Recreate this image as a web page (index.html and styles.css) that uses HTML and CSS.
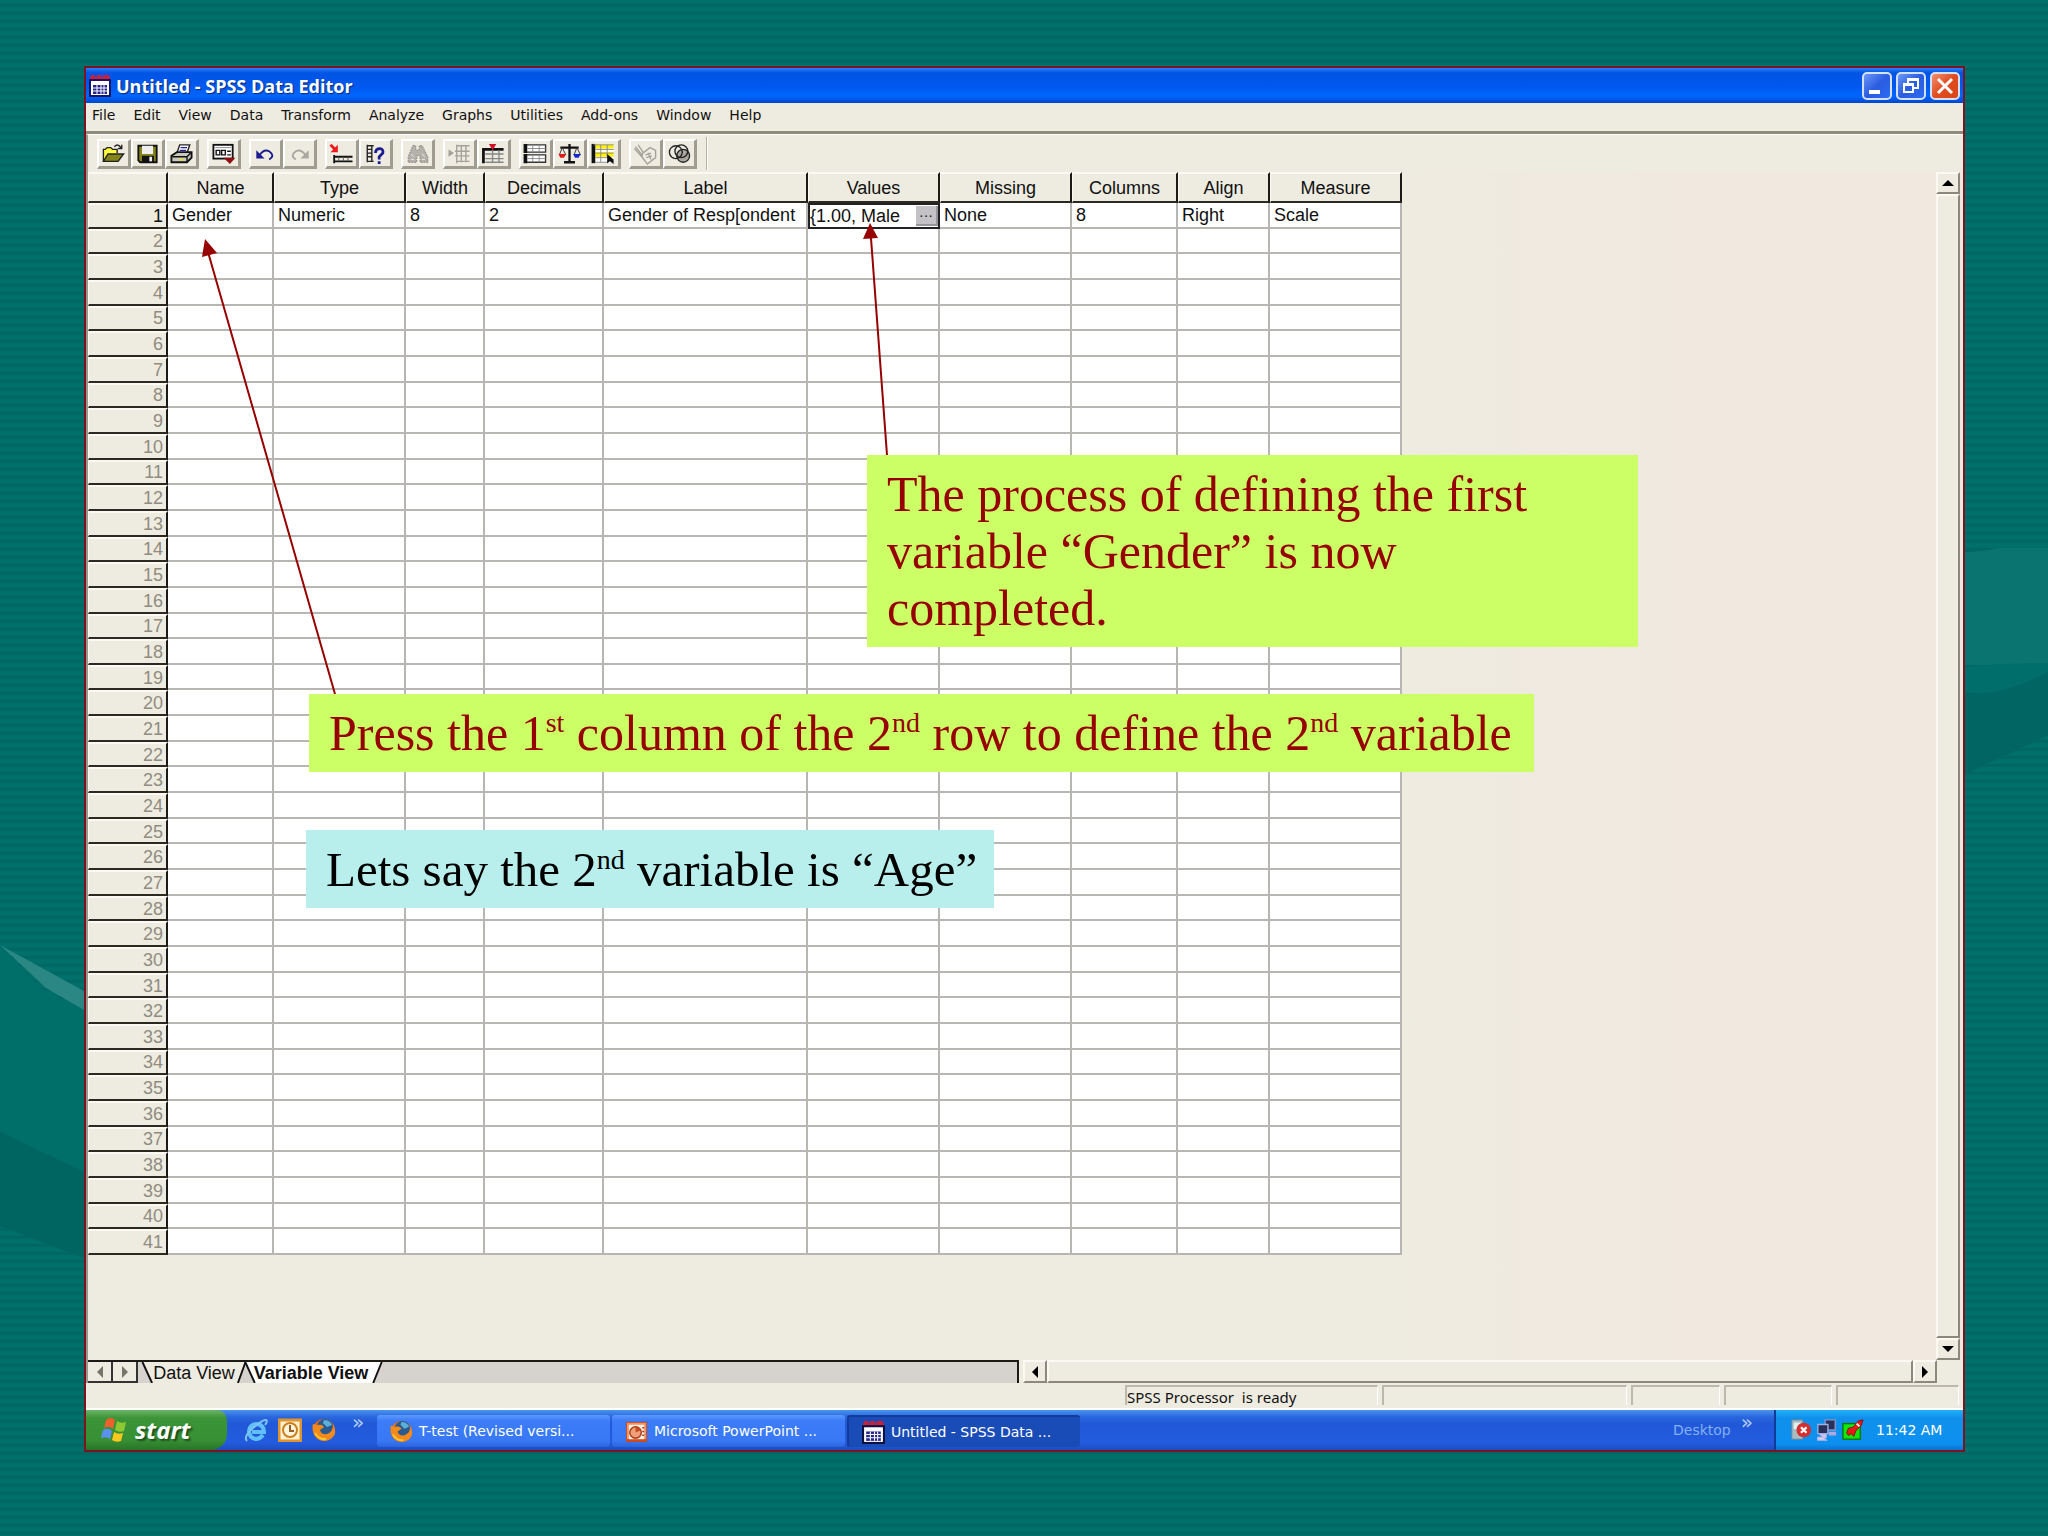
FILE: index.html
```html
<!DOCTYPE html>
<html lang="en">
<head>
<meta charset="utf-8">
<title>Untitled - SPSS Data Editor</title>
<link rel="stylesheet" href="styles.css">
</head>
<body>
<div class="slide">
  <svg class="backdrop" viewBox="0 0 2048 1536" preserveAspectRatio="none" aria-hidden="true">
    <path d="M0 945 L40 988 L84 1010 V1172 L0 1132Z" fill="#006e69"/>
    <path d="M0 1132 L84 1172 V1258 L0 1226Z" fill="#006460"/>
    <path d="M0 945 L84 991 V1010 L46 988Z" fill="#2a8783"/>
    <path d="M1964 550 Q1985 554 1998 548 H2048 V735 L1964 775Z" fill="#006563"/>
    <path d="M1964 552 Q1985 552 1998 548 H2048 V665 H1964Z" fill="#0a7570"/>
    <path d="M1964 667 Q2000 663 2048 663 V672 Q2000 698 1964 692Z" fill="#006e6b"/>
  </svg>

  <main class="window">
    <header class="titlebar">
      <svg class="app-icon" viewBox="0 0 22 22" aria-hidden="true"><path d="M1 3h20M2 1h4M8 1h4M14 1h6" stroke="#c8203c" stroke-width="2"/><rect x="1" y="5" width="20" height="16" fill="#fff" stroke="#15156a" stroke-width="2"/><path d="M4 10h14v9H4z" fill="#24248c"/><path d="M4 13h14M4 16h14M8 10v9M12 10v9M15 10v9" stroke="#fff"/></svg>
      <h1>Untitled - SPSS Data Editor</h1>
      <div class="controls">
        <button type="button" aria-label="Minimize"><svg viewBox="0 0 26 24"><rect x="5" y="16" width="11" height="4" fill="#fff"/></svg></button>
        <button type="button" aria-label="Restore"><svg viewBox="0 0 26 24"><path d="M10 9V5h10v9h-4M10 6h10" fill="none" stroke="#fff" stroke-width="2"/><path d="M6 10h9v8H6zM6 11h9" fill="none" stroke="#fff" stroke-width="2"/></svg></button>
        <button type="button" class="close" aria-label="Close"><svg viewBox="0 0 26 24"><path d="M6 5l14 14M20 5L6 19" stroke="#fff" stroke-width="3"/></svg></button>
      </div>
    </header>

    <nav class="menu">
      <button type="button">File</button><button type="button">Edit</button><button type="button">View</button><button type="button">Data</button><button type="button">Transform</button><button type="button">Analyze</button><button type="button">Graphs</button><button type="button">Utilities</button><button type="button">Add-ons</button><button type="button">Window</button><button type="button">Help</button>
    </nav>

    <div class="toolbar">
      <div class="group">
        <button type="button" aria-label="Open"><svg viewBox="0 0 26 24"><path d="M2 20V7h2l2-2h4l2 2h5v4" fill="#ffff3c" stroke="#222" stroke-width="1.5"/><path d="M2 20l5-8h17l-6 8z" fill="#84841a" stroke="#222" stroke-width="1.5"/><path d="M14 4q4-4 7 1M22 2v4h-4" fill="none" stroke="#222" stroke-width="1.5"/></svg></button>
        <button type="button" aria-label="Save"><svg viewBox="0 0 26 24"><path d="M3 3h20v18H5l-2-2z" fill="#84841a" stroke="#111" stroke-width="2"/><rect x="7" y="3" width="12" height="9" fill="#eee"/><rect x="7" y="14" width="13" height="7" fill="#111"/><rect x="15" y="15" width="3" height="5" fill="#eee"/></svg></button>
        <button type="button" aria-label="Print"><svg viewBox="0 0 26 24"><path d="M8 11l3-9h11l-3 9z" fill="#fff" stroke="#222" stroke-width="1.5"/><path d="M12 5h7M11 8h7" stroke="#2222a0" stroke-width="1.5"/><path d="M2 14l6-4h16v6l-5 5H2z" fill="#c8c8c0" stroke="#111" stroke-width="2"/><path d="M3 15h16l4-4M19 15v6" fill="none" stroke="#111" stroke-width="1.5"/><path d="M11 18h4" stroke="#e8e020" stroke-width="2"/></svg></button>
      </div>
      <div class="group">
        <button type="button" aria-label="Dialog recall"><svg viewBox="0 0 26 24"><rect x="2" y="2" width="21" height="15" fill="#fff" stroke="#111" stroke-width="2"/><path d="M4 5h17" stroke="#888"/><path d="M5 8h4v5H5zM11 8h4v5h-4zM17 9h4M17 13h4" fill="none" stroke="#111" stroke-width="1.5"/><path d="M13 16h13l-6 7z" fill="#8e1010"/></svg></button>
      </div>
      <div class="group">
        <button type="button" aria-label="Undo"><svg viewBox="0 0 26 24"><path d="M6 14q5-8 11-5 7 5 0 9" fill="none" stroke="#1c1c90" stroke-width="2"/><path d="M3 8v9h9z" fill="#1c1c90"/></svg></button>
        <button type="button" aria-label="Redo" disabled><svg viewBox="0 0 26 24"><path d="M20 14q-5-8-11-5-7 5 0 9" fill="none" stroke="#aaa8a0" stroke-width="2"/><path d="M23 8v9h-9z" fill="#aaa8a0"/></svg></button>
      </div>
      <div class="group">
        <button type="button" aria-label="Go to case"><svg viewBox="0 0 26 24"><path d="M1 2l6 6" stroke="#f01818" stroke-width="3"/><path d="M9 2v8H1z" fill="#f01818"/><path d="M5 13v9M5 15h20M5 20h20" stroke="#111" stroke-width="2"/><path d="M10 15v5M15 15v5M20 15v5" stroke="#555"/></svg></button>
        <button type="button" aria-label="Variables"><svg viewBox="0 0 26 24"><path d="M4 3h7M4 2v19M4 20h7M9 3v17M4 7h5M4 11h5M4 15h5" fill="none" stroke="#222" stroke-width="1.5"/><path d="M13 11q0-5 5-5 4 1 3 5l-4 4v3M17 20v3" fill="none" stroke="#1c1c90" stroke-width="3"/></svg></button>
      </div>
      <div class="group">
        <button type="button" aria-label="Find" disabled><svg viewBox="0 0 26 24"><path d="M8 3h3v5h4V3h3l6 12v6h-8v-7h-4v7H3v-6z" fill="#b4b2aa" stroke="#98968e" stroke-dasharray="2 1" stroke-width="1.5"/><path d="M6 12l3 3M18 12l3 3M6 18h3M18 18h3" stroke="#eee"/></svg></button>
      </div>
      <div class="group">
        <button type="button" aria-label="Insert case" disabled><svg viewBox="0 0 26 24"><path d="M1 7v8l6-4z" fill="#a4a29a"/><path d="M10 2v20M10 3h14M8 9h16M8 14h16M10 20h14M15 3v18M20 3v18" stroke="#a4a29a" stroke-width="1.5"/></svg></button>
        <button type="button" aria-label="Insert variable"><svg viewBox="0 0 26 24"><path d="M2 22V7h22" fill="none" stroke="#111" stroke-width="3"/><path d="M4 12h20M4 17h20M4 21h20M12 8v14M19 8v14" stroke="#888" stroke-width="1.5"/><path d="M8 1h8l-4 7z" fill="#d01028"/></svg></button>
      </div>
      <div class="group">
        <button type="button" aria-label="Split file"><svg viewBox="0 0 26 24"><path d="M3 2h21v8H3zM3 13h21v8H3z" fill="#fff" stroke="#333" stroke-width="1.5"/><path d="M2 1v10M2 12v10" stroke="#111" stroke-width="4"/><path d="M4 6h20M4 17h20M10 3v7M17 3v7M10 14v7M17 14v7" stroke="#888"/></svg></button>
        <button type="button" aria-label="Weight cases"><svg viewBox="0 0 26 24"><path d="M13 1v20M3 5h20M7 21h12" stroke="#111" stroke-width="2.5"/><path d="M5 5l-3 8h7L5 5M21 5l-3 8h7z" fill="none" stroke="#333"/><path d="M1 12h8l-2 4H3z" fill="#e01818"/><path d="M17 12h8l-2 4h-4z" fill="#1828d0"/></svg></button>
        <button type="button" aria-label="Select cases"><svg viewBox="0 0 26 24"><rect x="2" y="2" width="22" height="19" fill="#fff"/><path d="M3 2h21v4H3zM3 10h21v5H3z" fill="#fff200"/><path d="M2 1v21" stroke="#111" stroke-width="4"/><path d="M2 2h22M4 7h20M4 11h20M4 16h14M4 21h14M10 2v19M17 2v14" stroke="#888"/><path d="M17 12v10l3-2 4 3v-5z" fill="#111"/></svg></button>
      </div>
      <div class="group">
        <button type="button" aria-label="Value labels" disabled><svg viewBox="0 0 26 24"><path d="M2 4l8 10M1 6l8 9M5 2l6 9M10 11l8-6 6 3v8l-9 7-6-8z" fill="none" stroke="#a4a29a" stroke-width="1.5"/><path d="M13 13l6-2M14 16l6-2M16 11l3 7" stroke="#a4a29a" stroke-width="1.5"/></svg></button>
        <button type="button" aria-label="Use sets"><svg viewBox="0 0 26 24"><circle cx="17" cy="14" r="7" fill="#aaa8a0" stroke="#222" stroke-width="1.5"/><circle cx="9" cy="10" r="7" fill="none" stroke="#222" stroke-width="1.5"/><circle cx="15" cy="9" r="7" fill="none" stroke="#222" stroke-width="1.5"/></svg></button>
      </div>
      <span class="divider"></span>
    </div>

    <section class="workspace">
      <div class="grid-area">
        <table class="grid">
          <colgroup><col class="c-num"><col class="c-name"><col class="c-type"><col class="c-width"><col class="c-dec"><col class="c-label"><col class="c-type"><col class="c-type"><col class="c-name"><col class="c-align"><col class="c-type"></colgroup>
          <thead><tr><th></th><th>Name</th><th>Type</th><th>Width</th><th>Decimals</th><th>Label</th><th>Values</th><th>Missing</th><th>Columns</th><th>Align</th><th>Measure</th></tr></thead>
          <tbody id="rows">
            <tr class="filled"><th>1</th><td>Gender</td><td>Numeric</td><td>8</td><td>2</td><td>Gender of Resp[ondent</td><td class="active"><div class="editor"><span>{1.00, Male</span><button type="button" aria-label="Edit values">···</button></div></td><td>None</td><td>8</td><td>Right</td><td>Scale</td></tr>
          </tbody>
        </table>
      </div>
      <div class="vscroll">
        <button type="button" aria-label="Scroll up"><svg viewBox="0 0 12 6"><path d="M0 6L6 0l6 6z"/></svg></button>
        <div class="thumb"></div>
        <button type="button" aria-label="Scroll down"><svg viewBox="0 0 12 6"><path d="M0 0l6 6 6-6z"/></svg></button>
      </div>
    </section>

    <div class="sheetbar">
      <div class="tabs">
        <button type="button" class="step" aria-label="Previous sheet"><svg viewBox="0 0 6 12"><path d="M6 0L0 6l6 6z"/></svg></button>
        <button type="button" class="step" aria-label="Next sheet"><svg viewBox="0 0 6 12"><path d="M0 0l6 6-6 6z"/></svg></button>
        <button type="button" class="tab data"><svg viewBox="0 0 112 22" aria-hidden="true"><path d="M2 0l12 22h88l8-22z" fill="#eeebe0"/><path d="M2 0l10 22M110 0l-8 22" stroke="#111" stroke-width="2"/></svg><span>Data View</span></button>
        <button type="button" class="tab variable"><svg viewBox="0 0 144 22" aria-hidden="true"><path d="M0 0l10 22h124l10-22z" fill="#fff"/><path d="M0 0l10 22M143 0l-9 22" stroke="#111" stroke-width="2"/></svg><span>Variable View</span></button>
      </div>
      <div class="hscroll">
        <button type="button" aria-label="Scroll left"><svg viewBox="0 0 6 12"><path d="M6 0L0 6l6 6z"/></svg></button>
        <div class="thumb"></div>
        <button type="button" aria-label="Scroll right"><svg viewBox="0 0 6 12"><path d="M0 0l6 6-6 6z"/></svg></button>
      </div>
    </div>

    <div class="status">
      <span class="s-main">SPSS Processor&nbsp; is ready</span><span class="s-wide"></span><span class="s-a"></span><span class="s-b"></span><span class="s-c"></span>
    </div>

    <footer class="taskbar">
      <button type="button" class="start"><svg viewBox="0 0 28 26" aria-hidden="true"><path d="M6 3q5-4 9 0l-2 9q-4-4-9-1z" fill="#f0602c"/><path d="M17 4q4 3 9 1l-2 9q-5 2-9-1z" fill="#8cc832"/><path d="M3 13q5-3 9 1l-2 8q-4-3-9-1z" fill="#5a90f0"/><path d="M14 15q4 3 9 1l-2 8q-5 2-9-1z" fill="#fac81e"/></svg><span>start</span></button>
      <div class="quick">
        <a href="#" aria-label="Internet Explorer"><svg viewBox="0 0 24 24"><path d="M19 17q-3 4-7 4-7-1-7-8 1-7 8-7 7 1 7 8H8" fill="none" stroke="#62c0f8" stroke-width="4"/><path d="M3 23q-4-4 6-13T22 2q2 1-1 5" fill="none" stroke="#7cc4f0" stroke-width="2"/></svg></a>
        <a href="#" aria-label="Outlook"><svg viewBox="0 0 24 24"><rect x="1" y="2" width="22" height="21" fill="#fff0d0" stroke="#e09430" stroke-width="3"/><circle cx="12" cy="12" r="7" fill="#fff6e0" stroke="#c88020" stroke-width="2"/><path d="M12 7v6h4" fill="none" stroke="#96601c" stroke-width="2"/></svg></a>
        <a href="#" aria-label="Firefox"><svg viewBox="0 0 24 24"><circle cx="12" cy="12" r="11" fill="#e86c14"/><circle cx="13" cy="9" r="8" fill="#2a5a90"/><path d="M12 2q6 0 8 5l-5 2-4-4z" fill="#5cb0d8"/><path d="M1 6l5 1q4-1 6 2l-4 3q1 5 7 4 6-2 6-9 5 8-1 13-8 6-15 0-6-6-4-14z" fill="#f48a1c"/><path d="M3 15q4 7 11 6" fill="none" stroke="#f8c830" stroke-width="2"/></svg></a>
        <span class="more">»</span>
      </div>
      <button type="button" class="task"><svg viewBox="0 0 24 24" aria-hidden="true"><circle cx="12" cy="12" r="11" fill="#e86c14"/><circle cx="13" cy="9" r="8" fill="#2a5a90"/><path d="M12 2q6 0 8 5l-5 2-4-4z" fill="#5cb0d8"/><path d="M1 6l5 1q4-1 6 2l-4 3q1 5 7 4 6-2 6-9 5 8-1 13-8 6-15 0-6-6-4-14z" fill="#f48a1c"/><path d="M3 15q4 7 11 6" fill="none" stroke="#f8c830" stroke-width="2"/></svg><span>T-test (Revised versi...</span></button>
      <button type="button" class="task"><svg viewBox="0 0 24 24" aria-hidden="true"><rect x="1" y="2" width="22" height="21" fill="#c84c20"/><path d="M2 3h20v17H2z" fill="#f09468"/><path d="M4 5h16v15H4z" fill="#fff0e4"/><circle cx="11" cy="13" r="6" fill="#f0a078" stroke="#a83c18" stroke-width="1.5"/><path d="M11 13V7a6 6 0 0 1 5 4z" fill="#c84c20"/><path d="M18 8h2M18 12h2M18 16h2" stroke="#a83c18" stroke-width="1.5"/></svg><span>Microsoft PowerPoint ...</span></button>
      <button type="button" class="task current"><svg viewBox="0 0 22 22" aria-hidden="true"><path d="M1 3h20M2 1h4M8 1h4M14 1h6" stroke="#c8203c" stroke-width="2"/><rect x="1" y="5" width="20" height="16" fill="#fff" stroke="#101040" stroke-width="2"/><path d="M4 10h14v9H4z" fill="#24248c"/><path d="M4 13h14M4 16h14M8 10v9M12 10v9M15 10v9" stroke="#fff"/></svg><span>Untitled - SPSS Data ...</span></button>
      <div class="desktop"><span>Desktop</span><span class="more">»</span></div>
      <div class="tray">
        <svg viewBox="0 0 24 24" aria-hidden="true"><path d="M2 1h12v21H2z" fill="#a8bcc4" stroke="#6c8898"/><path d="M4 4h8v7H4z" fill="#dcf0f0"/><circle cx="15" cy="12" r="8" fill="#d43030"/><path d="M12 9l6 6M18 9l-6 6" stroke="#fff" stroke-width="2.5"/></svg>
        <svg viewBox="0 0 24 24" aria-hidden="true"><path d="M10 1h11v11H10z" fill="#28305c" stroke="#8898c8" stroke-width="1.5"/><path d="M14 14h8v4h-8z" fill="#b0a8dc"/><path d="M2 6h11v10H2z" fill="#28305c" stroke="#a0b0e0" stroke-width="1.5"/><path d="M5 17h6v3H2v3h9z" fill="#d8d0f4" stroke="#c0b8e8" stroke-width="1.5"/></svg>
        <svg viewBox="0 0 24 24" aria-hidden="true"><rect x="1" y="5" width="19" height="17" fill="#10e810" stroke="#087808" stroke-width="1.5"/><path d="M5 15l2-5 5-1 6-7 5-1-2 6-6 6-2 6-3-3-3 2z" fill="#e81818" stroke="#801010"/><path d="M16 5l3 3" stroke="#fff" stroke-width="2"/></svg>
        <time>11:42 AM</time>
      </div>
    </footer>
  </main>

  <svg class="arrows" width="900" height="700" viewBox="0 0 900 700" aria-hidden="true">
    <path d="M335 694L208 252M887 455L871 238" fill="none" stroke="#960000" stroke-width="2"/>
    <path d="M205 239l12 14-15 4zM870 223l8 15-15 1z" fill="#960000"/>
  </svg>
  <p class="note done">The process of defining the first variable “Gender” is now completed.</p>
  <p class="note press">Press the 1<sup>st</sup> column of the 2<sup>nd</sup> row to define the 2<sup>nd</sup> variable</p>
  <p class="note age">Lets say the 2<sup>nd</sup> variable is “Age”</p>
</div>
<script src="rows.js"></script>
</body>
</html>
```
FILE: rows.js
```js
// Fill the variable sheet with the empty numbered rows.
const body = document.getElementById("rows");
for (let n = 2; n <= 41; n++) {
  const row = body.insertRow();
  const head = document.createElement("th");
  head.textContent = n;
  row.append(head);
  for (let c = 0; c < 10; c++) row.insertCell();
}
```
FILE: styles.css
```css
* { box-sizing: border-box; }
body { margin: 0; }
button { margin: 0; padding: 0; border: 0; background: none; font: inherit; color: inherit; }
h1, p { margin: 0; }

.slide {
  position: relative;
  display: flex;
  min-height: 100vh;
  padding: 66px 83px 84px 84px;
  background: repeating-linear-gradient(#00706b 0, #00706b 3px, #006461 5px, #00706b 8px);
}
.backdrop { position: absolute; inset: 0; width: 100%; height: 100%; }
.window {
  position: relative;
  flex: 1;
  min-width: 0;
  display: flex;
  flex-direction: column;
  border: 2px solid #7a1420;
  background: #eeebe0;
  font: 15px/20px "DejaVu Sans", sans-serif;
  color: #111;
}

.titlebar {
  display: flex;
  align-items: center;
  gap: 5px;
  height: 35px;
  padding: 0 3px 0 3px;
  background: linear-gradient(#2a80f8 0, #0054e4 5px, #0058ee 18px, #0066ff 28px, #0046cc 35px);
}
.app-icon { width: 22px; height: 22px; }
.titlebar h1 {
  flex: 1;
  font: bold 18px/22px "Open Sans", sans-serif;
  color: #fff;
  text-shadow: 1px 1px 1px #0a2a80;
}
.controls { display: flex; gap: 4px; }
.controls button {
  width: 30px;
  height: 28px;
  border: 2px solid #d4e0fc;
  border-radius: 5px;
  background: linear-gradient(135deg, #6c98f8, #2a5ce0 50%, #2c6cf4);
}
.controls .close { background: linear-gradient(135deg, #f09070, #e04c20 50%, #d84818); }
.controls svg { display: block; width: 26px; height: 24px; }

.menu {
  display: flex;
  gap: 18px;
  padding: 2px 6px 6px;
  font-size: 14px;
  border-bottom: 3px solid #8e8a7c;
}

.toolbar {
  display: flex;
  gap: 8px;
  height: 38px;
  padding: 4px 9px;
  border-left: 2px solid #9c988c;
  border-top: 1px solid #fff;
}
.group { display: flex; }
.group button {
  width: 34px;
  height: 30px;
  border: solid;
  border-width: 2px 3px 3px 2px;
  border-color: #fff #a09c90 #a09c90 #fff;
}
.group svg { display: block; width: 25px; height: 22px; margin: auto; }
.divider { width: 2px; margin: -2px 0 -2px 1px; background: #b4b0a4; border-right: 1px solid #fff; }

.workspace {
  flex: 1;
  display: flex;
  border-left: 2px solid #9c988c;
  background: linear-gradient(90deg, #eeebe0 70%, #f1e9e0 85%);
}
.grid-area { flex: 1; min-width: 0; }
.grid {
  width: 1314px;
  height: 1083px;
  table-layout: fixed;
  border-collapse: separate;
  border-spacing: 0;
  font: 18px/20px "Liberation Sans", Arial, sans-serif;
}
.c-num { width: 80px; }
.c-name { width: 106px; }
.c-type { width: 132px; }
.c-width { width: 79px; }
.c-dec { width: 119px; }
.c-label { width: 204px; }
.c-align { width: 92px; }
.grid th {
  padding: 0;
  font-weight: normal;
  background: #eeebe0;
  border: solid;
  border-width: 2px 2px 2px 1px;
  border-color: #fbf9f2 #1c1a14 #2c2a20 #fbf9f2;
}
.grid thead th { height: 31px; }
.grid tbody th { text-align: right; color: #908c80; padding-right: 3px; }
.grid tbody .filled th { color: #111; }
.grid td {
  padding: 0 0 0 4px;
  background: #fff;
  border: solid #b8b6b2;
  border-width: 0 2px 2px 0;
  white-space: nowrap;
}
.grid td.active { padding: 0; border: 2px solid #222; }
.editor { display: flex; justify-content: space-between; align-items: center; }
.editor button {
  width: 22px;
  height: 20px;
  background: #c4c2c6;
  border: solid #98969a;
  border-width: 0 2px 2px 0;
  line-height: 18px;
  font-size: 14px;
}

.vscroll { display: flex; flex-direction: column; width: 27px; padding-right: 3px; }
.vscroll button, .hscroll button, .thumb {
  display: grid;
  place-items: center;
  background: #eeebe0;
  border: 2px solid;
  border-color: #fbf9f2 #8c887c #8c887c #fbf9f2;
}
.vscroll button { height: 22px; }
.vscroll svg { width: 12px; height: 6px; }
.vscroll .thumb { flex: 1; }
.hscroll svg, .step svg { width: 6px; height: 12px; }

.sheetbar { display: flex; gap: 4px; height: 23px; padding-right: 26px; border-left: 2px solid #9c988c; }
.tabs {
  flex: 0 1 931px;
  display: flex;
  border-top: 2px solid #1c1a14;
  border-right: 2px solid #1c1a14;
  background: #d6d2cd;
  font: 18px/20px "Liberation Sans", Arial, sans-serif;
}
.step {
  display: grid;
  place-items: center;
  width: 25px;
  background: #eeebe0;
  border: solid #333;
  border-width: 0 2px 2px 0;
}
.step svg { fill: #77746a; }
.tab { position: relative; height: 21px; }
.tab svg { position: absolute; inset: 0; width: 100%; height: 100%; }
.tab span { position: relative; }
.data { width: 112px; }
.variable { width: 144px; margin-left: -8px; padding-right: 6px; font-weight: bold; }
.hscroll { flex: 1; display: flex; }
.hscroll button { width: 24px; }
.hscroll .thumb { flex: 1; }

.status {
  display: flex;
  justify-content: flex-end;
  gap: 4px;
  height: 27px;
  padding: 2px 4px 3px 0;
  border-bottom: 2px solid #fff;
  font-size: 15px;
  font-family: "Noto Sans", sans-serif;
}
.status span { border: solid; border-width: 2px 1px 0 2px; border-color: #bcb8ac #fff #fff #bcb8ac; white-space: nowrap; }
.s-main { width: 253px; }
.s-wide { width: 245px; }
.s-a { width: 89px; }
.s-b { width: 108px; }
.s-c { width: 123px; }

.taskbar {
  display: flex;
  height: 40px;
  background: linear-gradient(#4a94ee 0, #2a66dc 7px, #2058d8 14px, #245ce0 32px, #1c4cc0 40px);
  color: #fff;
  font-size: 14px;
}
.start {
  display: flex;
  align-items: center;
  gap: 7px;
  width: 141px;
  padding-left: 14px;
  border-radius: 0 10px 16px 0;
  background: linear-gradient(#6cb468 0, #3c9438 8px, #389034 30px, #287428 40px);
  font: italic bold 24px/30px "Open Sans", sans-serif;
  text-shadow: 2px 2px 2px #1c4c1c;
}
.start svg { width: 28px; height: 26px; }
.quick { display: flex; align-items: center; gap: 10px; width: 150px; padding-left: 17px; }
.quick svg { display: block; width: 24px; height: 24px; }
.more { align-self: flex-start; padding: 2px 0 0 6px; font-size: 20px; color: #b4ccf4; }
.task {
  display: flex;
  align-items: center;
  gap: 6px;
  width: 233px;
  margin: 5px 2px 3px 0;
  padding: 0 0 0 13px;
  border-radius: 3px;
  background: linear-gradient(#5c98fc, #3c7cf8 6px, #3878f4 26px, #2c64dc);
  white-space: nowrap;
}
.task svg { flex: none; width: 23px; height: 23px; }
.current { background: #1a4cb8; padding-left: 13px; border: solid #123c9c; border-width: 2px 0 0 2px; }
.desktop { flex: 1; display: flex; align-items: center; justify-content: flex-end; gap: 4px; padding-right: 21px; color: #84b0f4; }
.tray {
  display: flex;
  align-items: center;
  gap: 4px;
  width: 189px;
  padding-left: 14px;
  border-left: 2px solid #0c3c98;
  background: linear-gradient(#20b0f8 0, #1090ec 8px, #0c90f0 34px, #0c70d0 40px);
}
.tray svg { width: 22px; height: 22px; }
.tray time { padding-left: 8px; white-space: nowrap; }

.arrows { position: absolute; left: 0; top: 0; pointer-events: none; }
.note {
  position: absolute;
  padding: 11px 20px 10px;
  background: #ccff66;
  color: #960000;
  font: 50px/57px "Liberation Serif", "Times New Roman", serif;
}
.note sup { font-size: 28px; line-height: 0; }
.done { left: 867px; top: 455px; width: 771px; }
.press { left: 309px; top: 694px; width: 1225px; white-space: nowrap; }
.age { left: 306px; top: 830px; width: 688px; background: #b8efec; color: #000; font-size: 49px; white-space: nowrap; }
```
